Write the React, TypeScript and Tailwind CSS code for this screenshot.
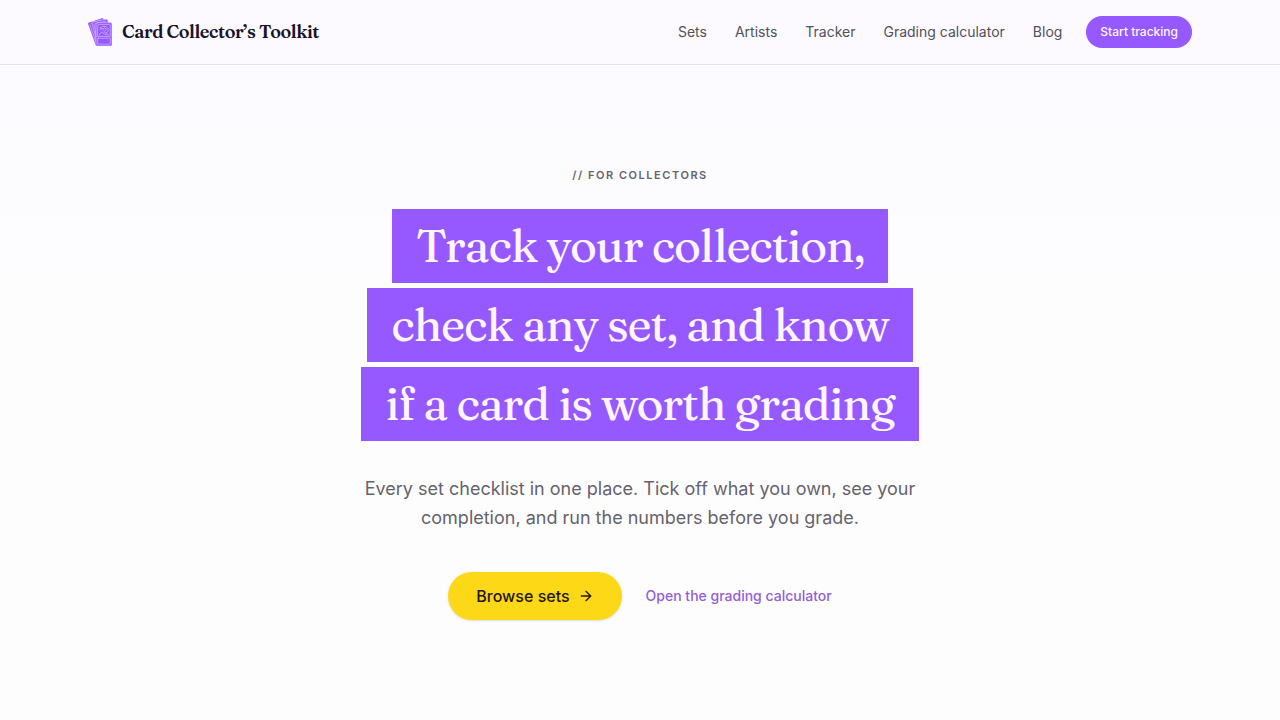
import { ArrowRight } from "lucide-react";

const navLinks = [
  { label: "Sets", href: "#sets" },
  { label: "Artists", href: "#artists" },
  { label: "Tracker", href: "#tracker" },
  { label: "Grading calculator", href: "#grading" },
  { label: "Blog", href: "#blog" },
];

const headlineLines = [
  "Track your collection,",
  "check any set, and know",
  "if a card is worth grading",
];

function Logo() {
  return (
    <svg className="w-6 h-7" viewBox="0 0 24 28" fill="none" aria-hidden="true">
      <g stroke="#dcc8ff" strokeWidth="0.6" strokeLinejoin="round" strokeLinecap="round">
        <path
          d="M1.200 4.600 13.800.2a1.300 1.300 0 0 1 1.600.8L22 22 9.200 27.600a1.300 1.300 0 0 1-1.700-.8L.2 6.300a1.300 1.300 0 0 1 1-1.700Z"
          fill="#9659ff"
          stroke="none"
        />
        <path d="m2 7 5.800 17M3.200 5.600 13 2" />
        <path
          d="M5.200 3.800 18 1.200a1.400 1.400 0 0 1 1.700 1.100L23 22 9.500 26 4.100 5.500a1.400 1.400 0 0 1 1.100-1.700Z"
          fill="#9659ff"
        />
        <path d="m6 6.500 2.500 12M6.800 5.500 17.500 3.200" />
        <rect x="8" y="4.600" width="16" height="23.400" rx="1.600" fill="#9659ff" />
        <path d="M9.700 7.200a.8.8 0 0 1 .8-.8h11a.8.8 0 0 1 .8.800v11.200H9.700Z" />
        <rect x="9.700" y="20.200" width="12.600" height="6" rx="0.500" />
        <path d="M12 11.800c.2-2 1.800-3.600 4-3.600 2.400 0 4.100 1.600 4.100 3.800 0 1.400-.6 2.400-1.600 3" />
        <path d="m12.300 9.200 3.200 3M14 11l3-1.200 1.300 1.700-1.600 1.700M11.200 17l2.400-3 5.200 3.400M16.200 13.800l4.600 3.200" />
      </g>
    </svg>
  );
}

function Header() {
  return (
    <header className="border-b border-[#e4e2ea] bg-[#fcfaff]">
      <div className="max-w-6xl mx-auto px-6 h-16 flex items-center justify-between">
        <a href="#home" className="flex items-center gap-2.5">
          <Logo />
          <span className="font-[Fraunces,'Liberation_Serif',serif] text-lg leading-7 font-semibold tracking-tight text-[#1a1326] whitespace-nowrap">
            Card Collector’s Toolkit
          </span>
        </a>
        <div className="flex items-center gap-6">
          <nav className="flex items-center gap-7">
            {navLinks.map((link) => (
              <a
                key={link.label}
                href={link.href}
                className="text-sm text-[#52505a] hover:text-[#1a1326] whitespace-nowrap"
              >
                {link.label}
              </a>
            ))}
          </nav>
          <button className="h-8 px-3.5 rounded-full bg-[#9659ff] text-[#fdf5ff] text-xs font-medium whitespace-nowrap cursor-pointer">
            Start tracking
          </button>
        </div>
      </div>
    </header>
  );
}

function Hero() {
  return (
    <section className="px-6 pt-[102px] pb-[100px] flex flex-col items-center text-center">
      <p className="text-[11px] leading-4 font-semibold tracking-[0.14em] uppercase text-[#65636c]">
        // For collectors
      </p>
      <h1 className="mt-[26px] flex flex-col items-center gap-[5px] font-[Fraunces,'Liberation_Serif',serif] text-[46px] leading-[74px] tracking-tight text-[#fdf5ff]">
        {headlineLines.map((line) => (
          <span key={line} className="bg-[#9659ff] px-6 whitespace-nowrap">
            {line}
          </span>
        ))}
      </h1>
      <p className="mt-[33px] max-w-[576px] text-lg leading-[29px] text-[#65636c]">
        Every set checklist in one place. Tick off what you own, see your
        completion, and run the numbers before you grade.
      </p>
      <div className="mt-10 flex items-center gap-6">
        <button className="h-12 px-7 flex items-center gap-2 rounded-full bg-[#fdd817] text-[#1f160a] font-medium shadow-sm cursor-pointer">
          Browse sets
          <ArrowRight className="w-4 h-4" />
        </button>
        <a href="#grading" className="text-sm font-medium text-[#945fd6] hover:underline">
          Open the grading calculator
        </a>
      </div>
    </section>
  );
}

export default function App() {
  return (
    <div className="min-h-screen bg-linear-to-b from-[#fbfaff] to-[#fdfdfe] to-40% font-[Inter,sans-serif]">
      <Header />
      <main>
        <Hero />
      </main>
    </div>
  );
}
